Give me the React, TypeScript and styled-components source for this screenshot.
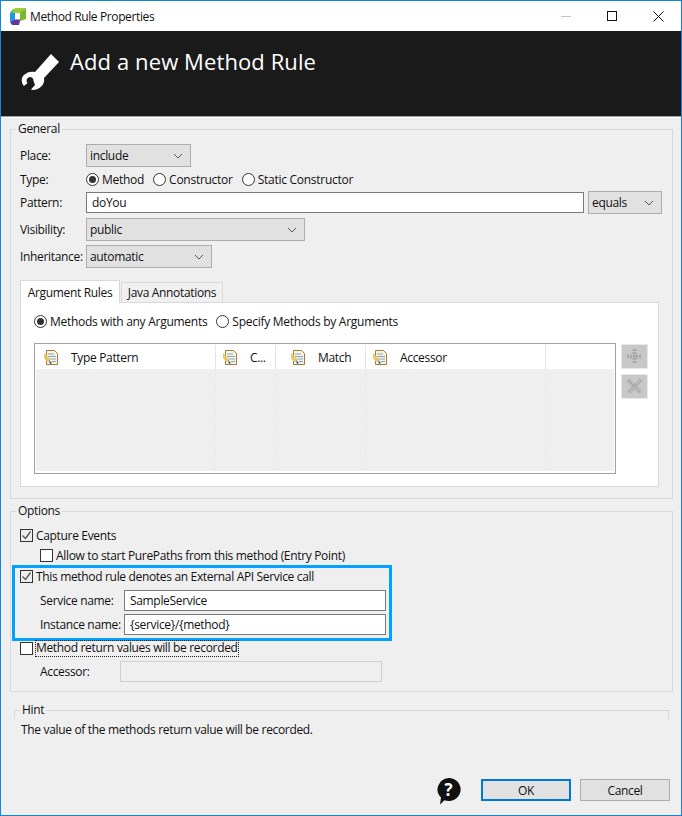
import React from "react";
import styled, { createGlobalStyle } from "styled-components";

const Global = createGlobalStyle`
  html, body { margin: 0; padding: 0; background: #efefef; }
  * { box-sizing: border-box; }
`;

const Win = styled.div`
  width: 682px; height: 816px; border: 1px solid #0f86d9; background: #efefef;
  display: flex; flex-direction: column; overflow: hidden;
  font-family: "Open Sans", "Noto Sans", sans-serif; font-size: 12px; letter-spacing: -0.33px; color: #111;
`;
const TitleBar = styled.div`
  height: 30px; background: #fff; display: flex; align-items: center; padding: 0 17px 0 8px; flex: none;
`;
const TitleText = styled.span`margin-left: 4px; flex: 1; color: #111; letter-spacing: -0.38px;`;
const WinControls = styled.div`display: flex; align-items: center; gap: 35px;`;
const Banner = styled.div`
  height: 86px; flex: none; background: #1a1a1a; border-bottom: 1px solid #a0a0a0; box-shadow: 0 1px 0 #fff;
  display: flex; align-items: flex-start; padding: 22px 0 0 20px; color: #fff;
`;
const BannerTitle = styled.h1`
  margin: -6px 0 0 11px; font-size: 22px; font-weight: 400; letter-spacing: 0.1px; line-height: 29px; color: #fff;
`;
const Content = styled.div`flex: 1; display: flex; flex-direction: column; padding: 4px 8px 0 9px; min-height: 0;`;
const Group = styled.fieldset`
  margin: 0; padding: 7px 13px 11px 9px; border: 1px solid #d9d9d9; min-width: 0;
`;
const OptionsGroup = styled(Group)`
  margin-top: 4px; height: 189px; padding-top: 0; padding-bottom: 0;
`;
const HintGroup = styled.fieldset`
  margin: 10px 4px 0 4px; padding: 0; height: 17px; border: 1px solid #d9d9d9; border-bottom: 0; min-width: 0;
`;
const Legend = styled.legend<{ $ml?: number }>`padding: 0 2px; margin-left: ${p => p.$ml ?? -4}px; line-height: 16px;`;
const Row = styled.div<{ $h?: number; $mt?: number }>`
  display: flex; align-items: center; height: ${p => p.$h ?? 23}px; margin-top: ${p => p.$mt ?? 0}px;
`;
const FieldLabel = styled.span<{ $w?: number; $indent?: number }>`
  width: ${p => p.$w ?? 66}px; padding-left: ${p => p.$indent ?? 0}px; flex: none; white-space: nowrap;
`;
const SelectBox = styled.div<{ $w: number; $ml?: number }>`
  width: ${p => p.$w}px; height: 23px; flex: none; margin-left: ${p => p.$ml ?? 0}px;
  background: #e1e1e1; border: 1px solid #adadad;
  display: flex; align-items: center; justify-content: space-between; padding: 0 7px 0 3px;
`;
const PatternInput = styled.input<{ $w?: number }>`
  width: ${p => p.$w ?? 498}px; height: 21px; flex: none; border: 1px solid #7a7a7a; background: #fff; padding: 0 5px;
  font: inherit; letter-spacing: inherit; color: #111; outline: none;
`;
const DisabledInput = styled(PatternInput)`background: #efefef; border-color: #cfcfcf;`;
const Options = styled.div<{ $gap?: number; $h?: number }>`
  display: flex; align-items: center; gap: ${p => p.$gap ?? 9}px; letter-spacing: -0.27px; height: ${p => p.$h ?? 22}px;
`;
const RadioLabel = styled.label`display: flex; align-items: center; gap: 3px; white-space: nowrap;`;
const RadioCircle = styled.span<{ $on?: boolean }>`
  width: 13px; height: 13px; flex: none; border-radius: 50%; border: 1px solid #333; background: #fff;
  display: flex; align-items: center; justify-content: center;
  &::after { content: ""; width: 7px; height: 7px; border-radius: 50%; background: ${p => (p.$on ? "#333" : "transparent")}; }
`;
const TabStrip = styled.div`display: flex; align-items: flex-end; height: 23px; margin-top: 12px; position: relative; z-index: 1; margin-bottom: -1px;`;
const Tab = styled.div<{ $active?: boolean }>`
  height: ${p => (p.$active ? 23 : 21)}px; padding: 0 7px; width: ${p => (p.$active ? 100 : 102)}px;
  margin-left: ${p => (p.$active ? 0 : 1)}px;
  display: flex; align-items: center; justify-content: center; white-space: nowrap;
  background: ${p => (p.$active ? "#fff" : "#f0f0f0")}; border: 1px solid #d9d9d9;
  border-bottom: ${p => (p.$active ? "0" : "1px solid #d9d9d9")};
`;
const TabPanel = styled.div`
  background: #fff; border: 1px solid #d9d9d9; height: 185px; padding: 9px 0 0 13px;
`;
const TableRow = styled.div`display: flex; align-items: flex-start; margin-top: 12px; gap: 5px;`;
const Table = styled.div`
  width: 582px; height: 131px; border: 1px solid #a0a0a0; background: #fff; padding: 1px 1px 2px 1px;
  display: grid; grid-template-columns: 180px 60px 90px 180px 1fr; grid-template-rows: 24px 1fr;
`;
const HeadCell = styled.div<{ $inset: number; $last?: boolean }>`
  display: flex; align-items: center; padding-left: ${p => p.$inset}px; gap: 13px;
  border-right: ${p => (p.$last ? "0" : "1px solid #e3e3e3")}; white-space: nowrap;
`;
const BodyCell = styled.div<{ $last?: boolean }>`
  background: #efefef; border-right: ${p => (p.$last ? "0" : "1px dashed #dcedf5")};
`;
const SideButtons = styled.div`display: flex; flex-direction: column; gap: 5px; padding-top: 1px;`;
const SideButton = styled.div`
  width: 27px; height: 25px; background: #c8c8c8; border: 1px solid #e8e8e8; display: flex; align-items: center; justify-content: center;
`;
const Box = styled.span<{ $on?: boolean }>`
  width: 13px; height: 13px; flex: none; border: 1px solid #333; background: ${p => (p.$on ? "#eee" : "#fff")};
  display: flex; align-items: center; justify-content: center;
`;
const CheckRow = styled.div<{ $h?: number; $indent?: number; $mt?: number }>`
  display: flex; align-items: center; gap: 3px; height: ${p => p.$h ?? 16}px; white-space: nowrap;
  margin-left: ${p => p.$indent ?? 0}px; margin-top: ${p => p.$mt ?? 0}px;
`;
const FocusText = styled.span`outline: 1px dotted #222; line-height: 14px; height: 15px;`;
const Highlight = styled.div`
  width: 380px; height: 76px; margin: 2px 0 0 -8px; border: 3px solid #00a2ff; padding: 0 0 0 5px;
`;
const Hint = styled.div`margin: 3px 0 0 11px; line-height: 16px;`;
const Footer = styled.div`
  margin-top: auto; height: 36px; padding: 0 3px 0 0; display: flex; align-items: flex-start; justify-content: flex-end;
`;
const HelpIcon = styled.span`margin: -1px 19px 0 0; display: flex;`;
const Btn = styled.div<{ $primary?: boolean }>`
  width: 90px; height: 22px; margin-left: ${p => (p.$primary ? 0 : 9)}px; background: #e1e1e1; display: flex; align-items: center; justify-content: center;
  border: ${p => (p.$primary ? "2px solid #0078d7" : "1px solid #adadad")};
`;

const Chevron = () => (
  <svg width="10" height="6" viewBox="0 0 10 6"><path d="M1 1l4 4 4-4" fill="none" stroke="#555" strokeWidth="1" /></svg>
);
const Logo = () => (
  <svg width="17" height="17" viewBox="0 0 17 17">
    <path d="M4 1L7 0H17L12 5H4Z" fill="#9ccb3b" />
    <path d="M1 5L4 1V5Z" fill="#53b948" />
    <path d="M1 5H6V12L1 14Z" fill="#1b9be6" />
    <path d="M11 5L17 0V11L11 13Z" fill="#7cb82f" />
    <path d="M6 5H11V12H6Z" fill="#fff" />
    <path d="M1 14L6 11.500H11V13L10 17H3Z" fill="#5f3a98" />
  </svg>
);
const Wrench = () => (
  <svg width="38" height="38" viewBox="2 3 38 38">
    <path
      d="M32 4L40 12L25 28C26 33 23 39 14 40L12 39.500L16 35L14.500 31A3.500 3.500 0 1 0 8.500 33L5 36C2 33 2 27 5 25C8 22 12 21 16 22Z"
      fill="#fff"
    />
  </svg>
);
const NoteIcon = () => (
  <svg width="14" height="15" viewBox="0 0 14 15" style={{ flex: "none" }}>
    <path d="M2.500.5h8l3 3v11h-11z" fill="#f7f4e6" stroke="#a9793a" />
    <path d="M4 4h6M4 6.500h8M6 9h6M8 11.500h4" stroke="#8aa3b5" strokeWidth="1" />
    <path d="M0 3l6 6-1 3-3-1-2-3z" fill="#e8c766" />
    <path d="M5 10l3 3-2 1z" fill="#2a4f8f" />
  </svg>
);
const Check = () => (
  <svg width="11" height="11" viewBox="0 0 11 11"><path d="M1.500 5.500l3 3 5-7" fill="none" stroke="#555" strokeWidth="1.300" /></svg>
);
const Radio = ({ on, children }: { on?: boolean; children: React.ReactNode }) => (
  <RadioLabel><RadioCircle $on={on} />{children}</RadioLabel>
);
const Select = ({ w, ml, children }: { w: number; ml?: number; children: React.ReactNode }) => (
  <SelectBox $w={w} $ml={ml}><span>{children}</span><Chevron /></SelectBox>
);

export default function App() {
  const cols: [string, number][] = [["Type Pattern", 8], ["C...", 7], ["Match", 15], ["Accessor", 7]];
  return (
    <Win>
      <Global />
      <TitleBar>
        <Logo />
        <TitleText>Method Rule Properties</TitleText>
        <WinControls>
          <svg width="11" height="11" viewBox="0 0 11 11"><path d="M0 5.500h10" stroke="#c4c4c4" /></svg>
          <svg width="11" height="11" viewBox="0 0 11 11"><rect x=".5" y=".5" width="9" height="9" fill="none" stroke="#111" /></svg>
          <svg width="11" height="11" viewBox="0 0 11 11"><path d="M.5.500l10 10M10.500.500l-10 10" stroke="#111" /></svg>
        </WinControls>
      </TitleBar>
      <Banner>
        <Wrench />
        <BannerTitle>Add a new Method Rule</BannerTitle>
      </Banner>
      <Content>
        <Group>
          <Legend>General</Legend>
          <Row><FieldLabel>Place:</FieldLabel><Select w={105}>include</Select></Row>
          <Row $mt={1} $h={22}>
            <FieldLabel>Type:</FieldLabel>
            <Options>
              <Radio on>Method</Radio><Radio>Constructor</Radio><Radio>Static Constructor</Radio>
            </Options>
          </Row>
          <Row $mt={1}>
            <FieldLabel>Pattern:</FieldLabel>
            <PatternInput readOnly value="doYou" />
            <Select w={74} ml={4}>equals</Select>
          </Row>
          <Row $mt={4}><FieldLabel>Visibility:</FieldLabel><Select w={219}>public</Select></Row>
          <Row $mt={4}><FieldLabel>Inheritance:</FieldLabel><Select w={126}>automatic</Select></Row>
          <TabStrip>
            <Tab $active>Argument Rules</Tab>
            <Tab>Java Annotations</Tab>
          </TabStrip>
          <TabPanel>
            <Options $h={19}>
              <Radio on>Methods with any Arguments</Radio>
              <Radio>Specify Methods by Arguments</Radio>
            </Options>
            <TableRow>
              <Table>
                {cols.map(([t, inset]) => (
                  <HeadCell key={t} $inset={inset}><NoteIcon /><span>{t}</span></HeadCell>
                ))}
                <HeadCell $inset={0} $last />
                <BodyCell /><BodyCell /><BodyCell /><BodyCell /><BodyCell $last />
              </Table>
              <SideButtons>
                <SideButton>
                  <svg width="17" height="17" viewBox="0 0 17 17"><path d="M8.500 1v15M1 8.500h15" stroke="#aaa" strokeWidth="4" strokeDasharray="2 1" fill="none" /></svg>
                </SideButton>
                <SideButton>
                  <svg width="17" height="17" viewBox="0 0 17 17"><path d="M2 2l13 13M15 2L2 15" stroke="#aaa" strokeWidth="4" strokeDasharray="2 1" fill="none" /></svg>
                </SideButton>
              </SideButtons>
            </TableRow>
          </TabPanel>
        </Group>
        <OptionsGroup>
          <Legend>Options</Legend>
          <CheckRow $mt={8}><Box $on><Check /></Box>Capture Events</CheckRow>
          <CheckRow $indent={20} $mt={4}><Box />Allow to start PurePaths from this method (Entry Point)</CheckRow>
          <Highlight>
            <CheckRow><Box $on><Check /></Box>This method rule denotes an External API Service call</CheckRow>
            <Row $h={21} $mt={6}>
              <FieldLabel $w={104} $indent={20}>Service name:</FieldLabel>
              <PatternInput readOnly value="SampleService" $w={262} />
            </Row>
            <Row $h={21} $mt={3}>
              <FieldLabel $w={104} $indent={20}>Instance name:</FieldLabel>
              <PatternInput readOnly value="{service}/{method}" $w={262} />
            </Row>
          </Highlight>
          <CheckRow $h={14}><Box /><FocusText>Method return values will be recorded</FocusText></CheckRow>
          <Row $h={21} $mt={6}>
            <FieldLabel $w={100} $indent={20}>Accessor:</FieldLabel>
            <DisabledInput readOnly value="" $w={262} />
          </Row>
        </OptionsGroup>
        <HintGroup><Legend $ml={5}>Hint</Legend></HintGroup>
        <Hint>The value of the methods return value will be recorded.</Hint>
        <Footer>
          <HelpIcon>
            <svg width="26" height="27" viewBox="0 0 26 27">
              <path d="M12.500 0a12 11.500 0 1 1-4 22.300L4 26.500l1-7A12 11.500 0 0 1 12.500 0z" fill="#111" />
              <text x="12.500" y="18" textAnchor="middle" fill="#fff" fontSize="17" fontWeight="700" fontFamily="Open Sans, sans-serif">?</text>
            </svg>
          </HelpIcon>
          <Btn $primary>OK</Btn>
          <Btn>Cancel</Btn>
        </Footer>
      </Content>
    </Win>
  );
}
